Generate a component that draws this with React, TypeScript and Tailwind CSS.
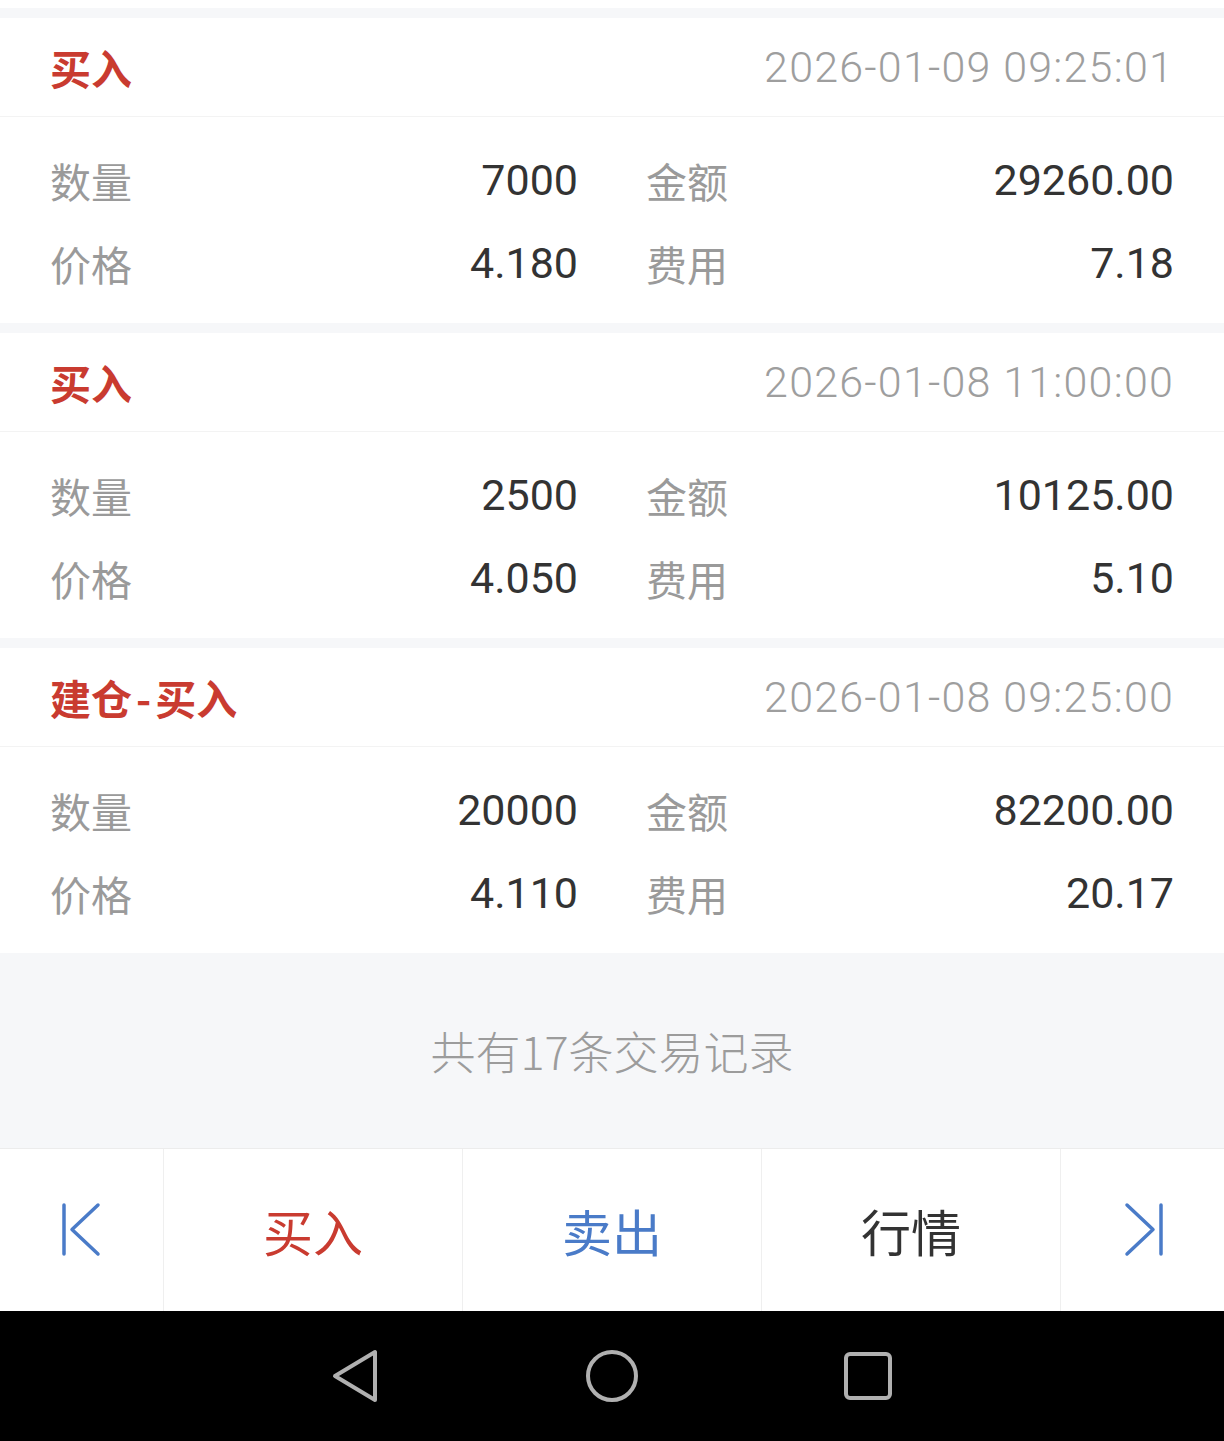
import React from "react";

type Trade = {
  title: string;
  time: string;
  qty: string;
  amount: string;
  price: string;
  fee: string;
};

const trades: Trade[] = [
  { title: "买入", time: "2026-01-09 09:25:01", qty: "7000", amount: "29260.00", price: "4.180", fee: "7.18" },
  { title: "买入", time: "2026-01-08 11:00:00", qty: "2500", amount: "10125.00", price: "4.050", fee: "5.10" },
  { title: "建仓-买入", time: "2026-01-08 09:25:00", qty: "20000", amount: "82200.00", price: "4.110", fee: "20.17" },
];

const cjk = { fontFamily: '"Noto Sans CJK SC", "Noto Sans", sans-serif' };
const num = { fontFamily: 'Roboto, "Noto Sans CJK SC", sans-serif' };

function Row({ l1, v1, l2, v2 }: { l1: string; v1: string; l2: string; v2: string }) {
  return (
    <div className="grid grid-cols-2 gap-x-[68px] h-[83px] items-center">
      <div className="flex items-center justify-between">
        <span className="text-[41px] text-[#9a9a9a] leading-none" style={cjk}>{l1}</span>
        <span className="text-[43px] text-[#333333] leading-none" style={num}>{v1}</span>
      </div>
      <div className="flex items-center justify-between">
        <span className="text-[41px] text-[#9a9a9a] leading-none" style={cjk}>{l2}</span>
        <span className="text-[43px] text-[#333333] leading-none" style={num}>{v2}</span>
      </div>
    </div>
  );
}

function Title({ text }: { text: string }) {
  const parts = text.split("-");
  return (
    <span className="text-[41px] font-bold text-[#c93b30] leading-none" style={cjk}>
      {parts.map((p, i) => (
        <React.Fragment key={i}>
          {i > 0 && <span className="mx-[4px]">-</span>}
          {p}
        </React.Fragment>
      ))}
    </span>
  );
}

function Card({ t }: { t: Trade }) {
  return (
    <div className="bg-white">
      <div className="h-[99px] flex items-center justify-between px-[50px] border-b border-[#f3f3f3]">
        <Title text={t.title} />
        <span className="text-[43px] font-light text-[#9e9e9e] leading-none tracking-[1.2px]" style={num}>{t.time}</span>
      </div>
      <div className="px-[50px] pt-[22px] pb-[18px]">
        <Row l1="数量" v1={t.qty} l2="金额" v2={t.amount} />
        <Row l1="价格" v1={t.price} l2="费用" v2={t.fee} />
      </div>
    </div>
  );
}

function FirstIcon() {
  return (
    <svg width="44" height="56" viewBox="0 0 44 56" fill="none">
      <path d="M4 3 V52" stroke="#4a7bc8" strokeWidth="3.5" strokeLinecap="round" />
      <path d="M38 3 L12 27.5 L38 52" stroke="#4a7bc8" strokeWidth="3.5" strokeLinecap="round" strokeLinejoin="round" />
    </svg>
  );
}

function LastIcon() {
  return (
    <svg width="44" height="56" viewBox="0 0 44 56" fill="none">
      <path d="M40 3 V52" stroke="#4a7bc8" strokeWidth="3.5" strokeLinecap="round" />
      <path d="M6 3 L32 27.5 L6 52" stroke="#4a7bc8" strokeWidth="3.5" strokeLinecap="round" strokeLinejoin="round" />
    </svg>
  );
}

export default function App() {
  return (
    <div className="w-[1224px] h-[1441px] bg-[#f6f7f9] flex flex-col overflow-hidden">
      <div className="h-[8px] bg-white shrink-0" />
      <div className="h-[10px] shrink-0" />
      <div className="flex flex-col gap-[10px] shrink-0">
        {trades.map((t, i) => (
          <Card key={i} t={t} />
        ))}
      </div>
      <div className="h-[195px] shrink-0 flex items-center justify-center">
        <span className="text-[45px] font-light text-[#9c9c9c] leading-none" style={cjk}>共有17条交易记录</span>
      </div>
      <div className="h-[163px] shrink-0 bg-white border-t border-[#ececec] grid grid-cols-[164px_299px_299px_299px_163px]">
        <div className="border-r border-[#efefef] flex items-center justify-center">
          <FirstIcon />
        </div>
        <div className="border-r border-[#efefef] flex items-center justify-center">
          <span className="text-[50px] text-[#c93b30] leading-none" style={cjk}>买入</span>
        </div>
        <div className="border-r border-[#efefef] flex items-center justify-center">
          <span className="text-[50px] text-[#4a7bc8] leading-none" style={cjk}>卖出</span>
        </div>
        <div className="border-r border-[#efefef] flex items-center justify-center">
          <span className="text-[50px] text-[#333333] leading-none" style={cjk}>行情</span>
        </div>
        <div className="flex items-center justify-center">
          <LastIcon />
        </div>
      </div>
      <div className="flex-1 bg-black flex items-center justify-center gap-[196px]">
        <div className="w-[60px] flex justify-center">
          <svg width="50" height="56" viewBox="0 0 50 56" fill="none">
            <path d="M44 4 V52 L4 28 Z" stroke="#b0b0b0" strokeWidth="4" strokeLinejoin="round" />
          </svg>
        </div>
        <div className="w-[60px] flex justify-center">
          <svg width="56" height="56" viewBox="0 0 56 56" fill="none">
            <circle cx="28" cy="28" r="24" stroke="#b0b0b0" strokeWidth="4" />
          </svg>
        </div>
        <div className="w-[60px] flex justify-center">
          <svg width="50" height="50" viewBox="0 0 50 50" fill="none">
            <rect x="3" y="3" width="44" height="44" rx="4" stroke="#b0b0b0" strokeWidth="4" />
          </svg>
        </div>
      </div>
    </div>
  );
}
